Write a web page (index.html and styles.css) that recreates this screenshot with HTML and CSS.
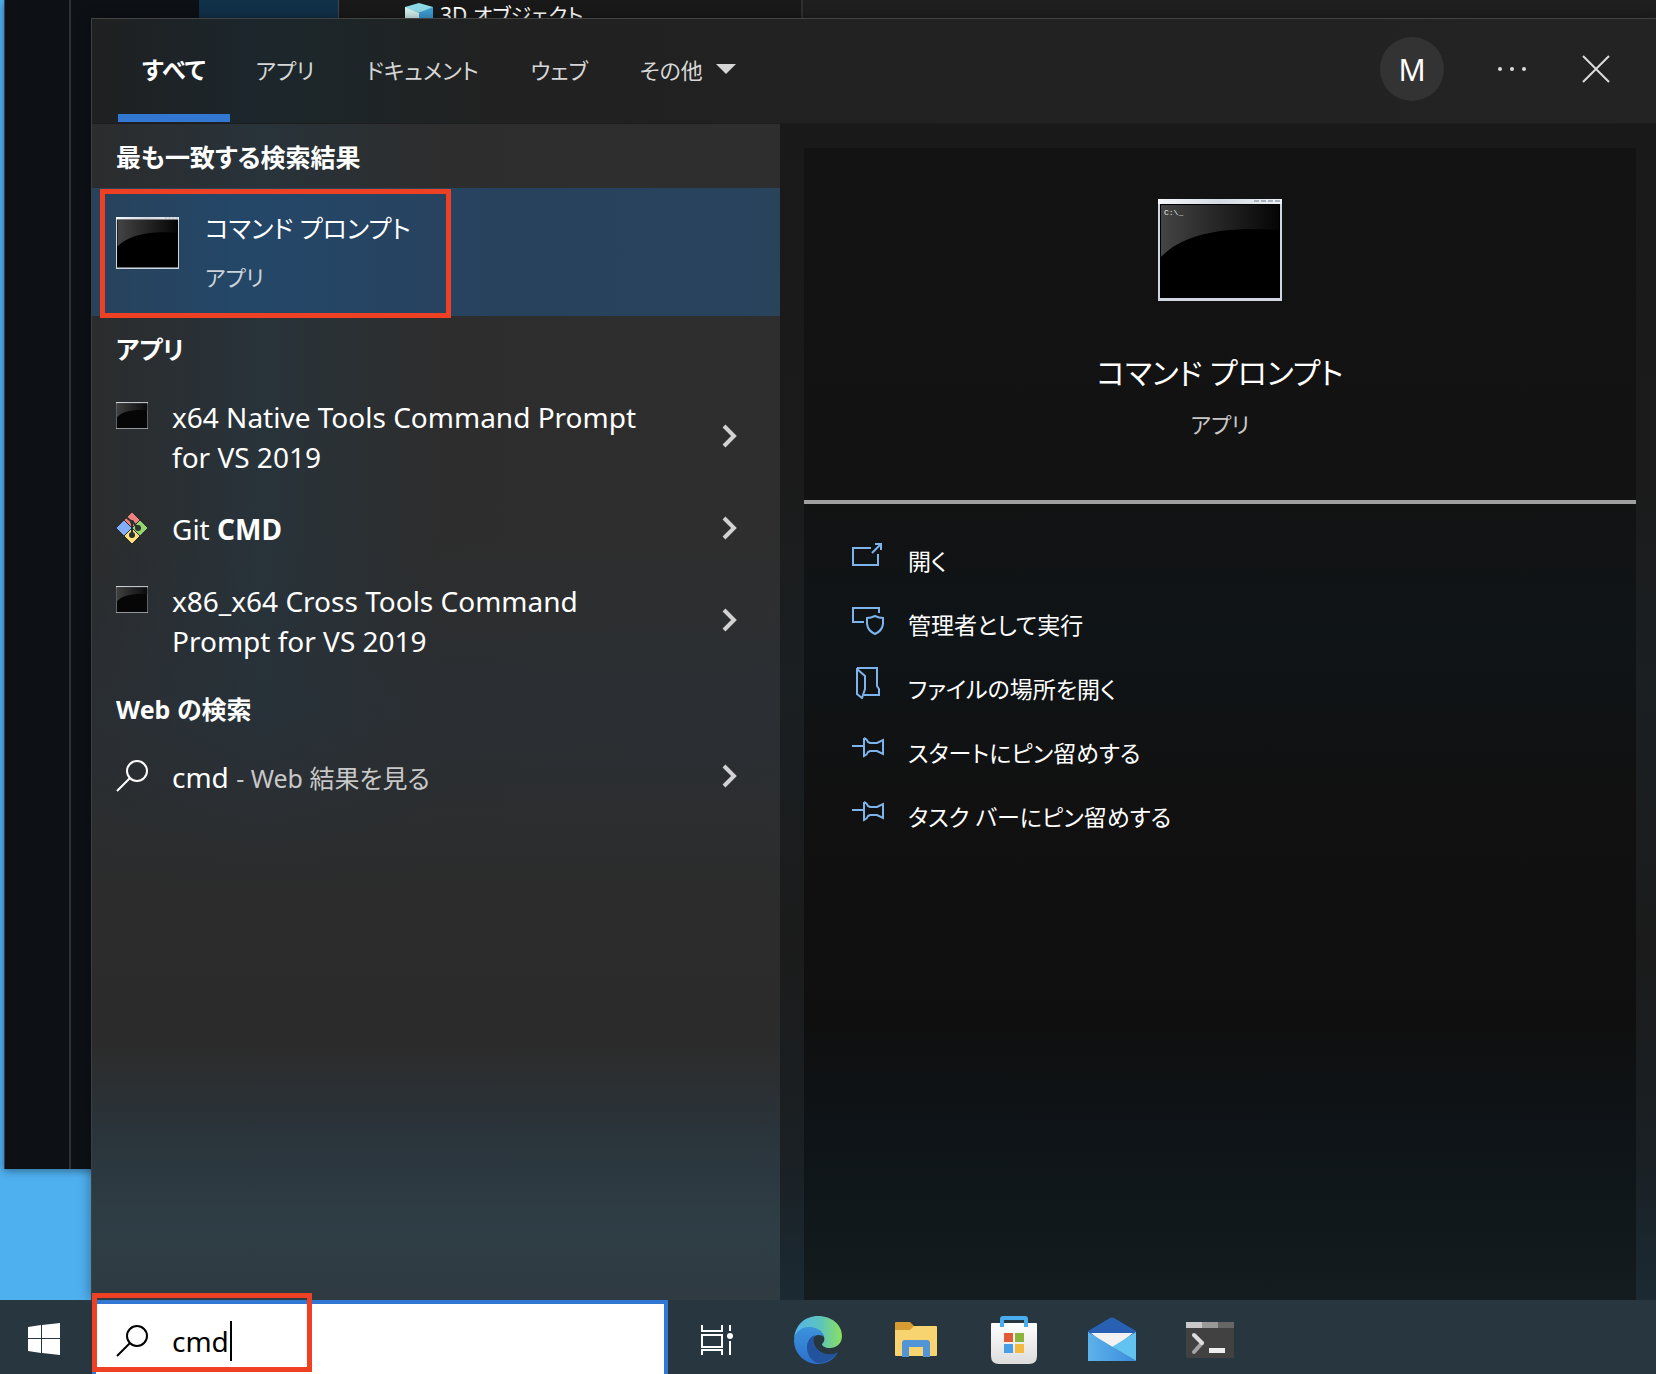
FILE: index.html
```html
<!DOCTYPE html>
<html lang="ja">
<head>
<meta charset="utf-8">
<title>検索</title>
<link rel="stylesheet" href="styles.css">
</head>
<body>
<svg class="defs" width="0" height="0" aria-hidden="true">
  <defs>
    <linearGradient id="bar" x1="0" x2="1"><stop offset="0" stop-color="#f6f8fa"/><stop offset=".5" stop-color="#d3dae2"/><stop offset="1" stop-color="#eef1f4"/></linearGradient>
    <linearGradient id="sheen" x1="0" x2="1"><stop offset="0" stop-color="#444"/><stop offset="1" stop-color="#050505"/></linearGradient>
    <linearGradient id="edgeTop" x1="0" x2="1"><stop offset="0" stop-color="#55b5ee"/><stop offset=".55" stop-color="#5cc4bd"/><stop offset="1" stop-color="#8be05c"/></linearGradient>
    <linearGradient id="edgeLow" x1="0" y1="0" x2="0" y2="1"><stop offset="0" stop-color="#3c93dc"/><stop offset="1" stop-color="#2c70cc"/></linearGradient>
    <linearGradient id="bag" x1="0" y1="0" x2="0" y2="1"><stop offset="0" stop-color="#fff"/><stop offset="1" stop-color="#dcdcdc"/></linearGradient>
    <linearGradient id="mailLow" x1="0" x2="1"><stop offset="0" stop-color="#5db2ea"/><stop offset="1" stop-color="#3b8cdc"/></linearGradient>
    <symbol id="console" viewBox="0 0 124 102">
      <rect width="124" height="102" fill="#cfd6e0"/>
      <rect width="124" height="5" fill="url(#bar)"/>
      <rect x="2" y="5" width="120" height="94" fill="#000"/>
      <path d="M3 6H121V31C66 27 25 35 3 58Z" fill="url(#sheen)"/>
      <path d="M96 2h26" stroke="#aab2bd" stroke-width="2" stroke-dasharray="5 2"/>
    </symbol>
    <symbol id="chevron" viewBox="0 0 16 24"><path d="M2 2l10 10L2 22" fill="none" stroke="#d2d2d2" stroke-width="4"/></symbol>
    <symbol id="search" viewBox="0 0 32 32"><circle cx="21" cy="11" r="10" fill="none" stroke="currentColor" stroke-width="2"/><path d="M14 18L1 31" stroke="currentColor" stroke-width="2"/></symbol>
    <symbol id="pin" viewBox="0 0 32 32"><path d="M0 15h12M12 7v16M12 7q3 1 4 4l2 1h7l6-3v14l-6-3h-7l-2 1q-1 3-4 4v-3" fill="none" stroke="currentColor" stroke-width="2"/></symbol>
  </defs>
</svg>

<div class="desktop">
  <div class="backwindow">
    <div class="rail"></div>
    <div class="nav"><div class="nav-selected"></div></div>
    <div class="files">
      <svg width="28" height="32" viewBox="0 0 28 32"><path d="M14 0l14 4v1l-14 5L0 5V4z" fill="#8edce8"/><path d="M0 4l14 6v22L0 25z" fill="#d6f1f1"/><path d="M28 4l-14 6v22l14-7z" fill="#3e9fd6"/></svg>
      <span>3D オブジェクト</span>
    </div>
    <div class="blank"></div>
  </div>

  <main class="panel">
    <header class="head">
      <nav class="tabs">
        <button class="tab active">すべて</button>
        <button class="tab">アプリ</button>
        <button class="tab">ドキュメント</button>
        <button class="tab">ウェブ</button>
        <button class="tab">その他<svg width="20" height="10" viewBox="0 0 20 10"><path d="M0 0h20L10 10z" fill="#d6d6d6"/></svg></button>
      </nav>
      <div class="tools">
        <button class="avatar">M</button>
        <button class="tool" aria-label="オプション"><svg width="32" height="32" viewBox="0 0 32 32" fill="#dcdcdc"><circle cx="4" cy="16" r="2"/><circle cx="16" cy="16" r="2"/><circle cx="28" cy="16" r="2"/></svg></button>
        <button class="tool" aria-label="閉じる"><svg width="32" height="32" viewBox="0 0 32 32"><path d="M3 3l26 26M29 3L3 29" stroke="#dcdcdc" stroke-width="2"/></svg></button>
      </div>
    </header>

    <div class="columns">
      <section class="results">
        <h2>最も一致する検索結果</h2>
        <button class="best">
          <svg width="63" height="52" viewBox="0 0 124 102" preserveAspectRatio="none"><use href="#console"/></svg>
          <span class="best-text"><span class="best-title">コマンド プロンプト</span><span class="best-kind">アプリ</span></span>
          <span class="mark mark-best"></span>
        </button>
        <h2>アプリ</h2>
        <button class="row">
          <span class="row-icon console"><svg width="32" height="27" viewBox="0 0 124 102" preserveAspectRatio="none" opacity=".85"><use href="#console"/></svg></span>
          <span class="row-text">x64 Native Tools Command Prompt for VS 2019</span>
          <svg class="chev" width="16" height="24"><use href="#chevron"/></svg>
        </button>
        <button class="row">
          <span class="row-icon"><svg width="32" height="32" viewBox="0 0 32 32">
            <path d="M16 1l7 7-7 7-7-7z" fill="#f0807c" stroke="#f0807c" stroke-linejoin="round"/><path d="M8 9l7 7-7 7-7-7z" fill="#80aef8" stroke="#80aef8" stroke-linejoin="round"/><path d="M24 9l7 7-7 7-7-7z" fill="#93d46c" stroke="#93d46c" stroke-linejoin="round"/><path d="M16 17l7 7-7 7-7-7z" fill="#fde07a" stroke="#fde07a" stroke-linejoin="round"/>
            <path d="M10 5l6 5v13M16 9l6 7" fill="none" stroke="#2b3032" stroke-width="2"/>
            <circle cx="16" cy="10" r="2" fill="#2b3032"/><circle cx="16" cy="23" r="3" fill="#2b3032"/><circle cx="22" cy="16" r="3" fill="#2b3032"/></svg></span>
          <span class="row-text">Git <b>CMD</b></span>
          <svg class="chev" width="16" height="24"><use href="#chevron"/></svg>
        </button>
        <button class="row">
          <span class="row-icon console"><svg width="32" height="27" viewBox="0 0 124 102" preserveAspectRatio="none" opacity=".85"><use href="#console"/></svg></span>
          <span class="row-text">x86_x64 Cross Tools Command Prompt for VS 2019</span>
          <svg class="chev" width="16" height="24"><use href="#chevron"/></svg>
        </button>
        <h2>Web の検索</h2>
        <button class="row">
          <span class="row-icon"><svg width="32" height="32"><use href="#search"/></svg></span>
          <span class="row-text">cmd <small>- Web 結果を見る</small></span>
          <svg class="chev" width="16" height="24"><use href="#chevron"/></svg>
        </button>
      </section>

      <section class="detail">
        <div class="card">
          <div class="hero">
            <svg width="124" height="102" viewBox="0 0 124 102"><use href="#console"/><text x="6" y="16" class="prompt">C:\_</text></svg>
            <h1>コマンド プロンプト</h1>
            <p>アプリ</p>
          </div>
          <div class="actions">
            <button class="action"><svg width="32" height="32" viewBox="0 0 32 32"><path d="M19 9H1v17h25V15M20 14l9-9M23 5h6v6" fill="none" stroke="currentColor" stroke-width="2"/></svg>開く</button>
            <button class="action"><svg width="32" height="32" viewBox="0 0 32 32"><path d="M12 19H1V5h26v5M23 13q4 2 8 2v6q-1 7-8 10-7-3-8-10v-6q4 0 8-2z" fill="none" stroke="currentColor" stroke-width="2"/></svg>管理者として実行</button>
            <button class="action"><svg width="32" height="32" viewBox="0 0 32 32"><path d="M5 1h20v18l2 3v6H12M5 1v26l5 4 1-3 2-6V9L5 2" fill="none" stroke="currentColor" stroke-width="2"/></svg>ファイルの場所を開く</button>
            <button class="action"><svg width="32" height="32"><use href="#pin"/></svg>スタートにピン留めする</button>
            <button class="action"><svg width="32" height="32"><use href="#pin"/></svg>タスク バーにピン留めする</button>
          </div>
        </div>
      </section>
    </div>
  </main>
</div>

<footer class="taskbar">
  <button class="start" aria-label="スタート"><svg width="32" height="32" viewBox="0 0 32 32" fill="#fff"><path d="M0 4l13-2v13H0zM14 2l18-2v15H14zM0 16h13v14L0 28zM14 16h18v16l-18-2z"/></svg></button>
  <label class="searchbox">
    <svg width="32" height="32"><use href="#search"/></svg>
    <input type="text" value="cmd" size="3" aria-label="検索"><span class="caret"></span>
    <span class="mark mark-search"></span>
  </label>
  <nav class="apps">
    <button class="app" aria-label="タスク ビュー"><svg width="48" height="48" viewBox="0 0 48 48"><path d="M9 9v6h20V9M9 39v-5h20v5M9 19h20v12H9zM37 9v6M37 25v14" fill="none" stroke="#fff" stroke-width="2"/><circle cx="37" cy="20" r="3" fill="#fff"/></svg></button>
    <button class="app" aria-label="Edge"><svg width="48" height="48" viewBox="0 0 48 48"><path d="M0 23C1 9 11 0 24 0c14 0 24 9 24 20 0 8-6 12-12 12-5 0-8-2-8-4 2-2 3-4 2-7C28 14 20 11 14 12 6 13 1 18 0 23z" fill="url(#edgeTop)"/><path d="M0 24C1 15 8 11 15 11c8 0 14 5 15 10-2-2-6-3-9-1-6 4-4 17 6 21 7 2 13 0 17-5-4 8-12 12-20 12C11 48 0 38 0 24z" fill="url(#edgeLow)"/><path d="M21 19c-11 4-11 22 2 28 8 1 17-4 21-11-5 3-12 3-17 0-7-4-9-12-6-17z" fill="#24539d"/></svg></button>
    <button class="app" aria-label="エクスプローラー"><svg width="48" height="48" viewBox="0 0 48 48"><path d="M3 7q0-1 1-1h14l4 4v4H3z" fill="#d79d33"/><path d="M3 14h15l4-4h22q1 0 1 1v28q0 1-1 1H4q-1 0-1-1z" fill="#f8d470"/><path d="M10 41V27q0-3 3-3h22q3 0 3 3v14h-7V31H17v10z" fill="#5195d8"/></svg></button>
    <button class="app" aria-label="Store"><svg width="48" height="48" viewBox="0 0 48 48"><path d="M1 8q0-1 1-1h44q1 0 1 1v32q0 8-8 8H9q-8 0-8-8z" fill="url(#bag)"/><path d="M12 11V3q0-1 1-1h22q1 0 1 1v8" fill="none" stroke="#49aeef" stroke-width="4"/><path d="M14 17h9v9h-9z" fill="#e05b36"/><path d="M25 17h9v9h-9z" fill="#8ab43a"/><path d="M14 28h9v9h-9z" fill="#479fe8"/><path d="M25 28h9v9h-9z" fill="#f6b93f"/></svg></button>
    <button class="app" aria-label="メール"><svg width="48" height="48" viewBox="0 0 48 48"><path d="M0 15L22 2q2-1 4 0l22 13v6H0z" fill="#2860b4"/><path d="M3 17h42L24 34z" fill="#f2f2f2"/><path d="M48 16v29L24 31z" fill="#62c3f0"/><path d="M0 16l48 29H0z" fill="url(#mailLow)"/></svg></button>
    <button class="app" aria-label="ターミナル"><svg width="48" height="48" viewBox="0 0 48 48"><rect y="6" width="48" height="36" rx="1" fill="#414141"/><path d="M0 6h16v6H0z" fill="#c9c9c9"/><path d="M16 6h16v6H16z" fill="#999"/><path d="M32 6h16v6H32z" fill="#666"/><path d="M16 27l-8 9" stroke="#a5a5a5" stroke-width="4" stroke-linecap="round"/><path d="M8 19l8 8" stroke="#dedede" stroke-width="4" stroke-linecap="round"/><path d="M23 32h16v5H23z" fill="#ededed"/></svg></button>
  </nav>
</footer>
</body>
</html>
```

FILE: styles.css
```css
* {
  box-sizing: border-box;
}

body {
  margin: 0;
  min-height: 100vh;
  display: flex;
  flex-direction: column;
  overflow: hidden;
  font-family: "Noto Sans", "Noto Sans CJK JP", sans-serif;
  font-feature-settings: "palt";
  font-size: 22px;
  color: #fff;
  background: #4fb0f0;
}

button,
input {
  font: inherit;
  font-feature-settings: inherit;
  color: inherit;
  background: none;
  border: 0;
  padding: 0;
  text-align: left;
}

svg {
  display: block;
  flex: none;
}

.defs {
  position: absolute;
}

.desktop {
  flex: 1;
  position: relative;
  display: flex;
  padding: 18px 0 0 91px;
}

/* window that shows behind the search panel */
.backwindow {
  position: absolute;
  inset: 0 0 131px 4px;
  display: flex;
  background: #0d1116;
  border-left: 1px solid #30414d;
  box-shadow: 0 2px 8px #0006;
}

.rail {
  width: 66px;
  border-right: 2px solid #303235;
}

.nav {
  width: 268px;
  padding-left: 128px;
  border-right: 1px solid #3c4650;
}

.nav-selected {
  height: 100%;
  background: #113149;
}

.files {
  width: 464px;
  padding: 3px 0 0 66px;
  display: flex;
  align-items: flex-start;
  gap: 7px;
  font-size: 21px;
  line-height: 24px;
  background: #191919;
  border-right: 2px solid #303030;
}

.blank {
  flex: 1;
  background: #1f1f1f;
}

.panel {
  position: relative;
  flex: 1;
  display: flex;
  flex-direction: column;
  border-top: 1px solid #434343;
  border-left: 1px solid #3c4043;
  background: #222;
  box-shadow: 0 0 12px #0006;
}

.head {
  height: 105px;
  display: flex;
  justify-content: space-between;
  padding: 0 18px 0 26px;
  background: linear-gradient(90deg, #1f2021 0, #1c262c 160px, #1d2629 220px, #212121 400px, #232323 100%);
  border-bottom: 1px solid #1c1c1c;
}

.tabs {
  display: flex;
}

.tab {
  display: flex;
  align-items: center;
  gap: 13px;
  margin-bottom: 1px;
  padding: 0 26px 4px;
  color: #d6d6d6;
  border-top: 8px solid transparent;
  border-bottom: 8px solid transparent;
}

.tab.active {
  padding: 0 24px 4px;
  color: #fff;
  font-size: 24px;
  font-weight: 700;
  border-bottom-color: #3277d2;
}

.tools {
  display: flex;
  align-items: center;
  padding-bottom: 4px;
}

.avatar {
  width: 64px;
  height: 64px;
  margin-right: 26px;
  border-radius: 50%;
  background: #333;
  font-size: 30px;
  text-align: center;
}

.tool {
  width: 84px;
  height: 64px;
  display: grid;
  place-items: center;
}

.columns {
  flex: 1;
  display: flex;
}

.results {
  flex: 0 0 688px;
  background:
    linear-gradient(180deg, #2d2d2d00 0, #2d2d2d00 60%, #2c2b2b 78%, #2a343b 86%, #2f3e46 94%, #2f3a41 100%),
    linear-gradient(180deg, #28303800 0, #28303800 35%, #28303888 50%, #2c2c2c 66%),
    linear-gradient(90deg, #2b2c2d 0, #28333a 170px, #2d2d2d 350px, #2e2e2e 100%);
}

h2 {
  margin: 0;
  padding: 2px 24px 0;
  font-size: 25px;
  font-weight: 700;
  line-height: 62px;
}

.best {
  position: relative;
  display: flex;
  align-items: flex-start;
  gap: 26px;
  width: 100%;
  height: 128px;
  padding: 16px 24px;
  background: linear-gradient(90deg, #28425c 0, #244768 150px, #28425e 400px, #29435d 100%);
}

.best svg {
  margin-top: 13px;
}

.best-text {
  display: flex;
  flex-direction: column;
  gap: 9px;
}

.best-title {
  font-size: 25px;
  line-height: 48px;
}

.best-kind {
  line-height: 32px;
  color: #ccd3da;
}

.mark {
  position: absolute;
  border: 5px solid #ee4023;
  pointer-events: none;
}

.mark-best {
  left: 8px;
  top: 1px;
  width: 351px;
  height: 129px;
}

.row {
  display: flex;
  align-items: flex-start;
  width: 100%;
  padding: 16px 42px 16px 24px;
  font-size: 28px;
  line-height: 40px;
}

.row-icon {
  width: 56px;
  padding-top: 4px;
}

.row-icon.console {
  padding-top: 6px;
}

.row-text {
  flex: 1;
  padding: 1px 60px 0 0;
  margin-bottom: -1px;
}

.row-text small {
  font-size: 25px;
  line-height: 24px;
  color: #c8c8c8;
}

.chev {
  align-self: center;
}

.detail {
  flex: 1;
  padding: 24px 20px 0 24px;
  background: linear-gradient(180deg, #191919 0, #1b1b1b 30%, #1a1f22 48%, #1b1b1b 70%, #1a2024 88%, #1b2a33 100%);
}

.card {
  height: 100%;
  background: linear-gradient(180deg, #131313 0, #121212 30%, #0f1417 42%, #111 56%, #0f0f0f 76%, #0e1418 86%, #141c20 100%);
}

.hero {
  display: flex;
  flex-direction: column;
  align-items: center;
  padding: 51px 0 57px;
  border-bottom: 4px solid #a0a0a0;
}

.prompt {
  font: 8px "Liberation Mono", monospace;
  fill: #eee;
}

h1 {
  margin: 48px 0 8px;
  font-size: 30px;
  font-weight: 400;
  line-height: 48px;
}

.hero p {
  margin: 0;
  line-height: 38px;
  color: #c8c8c8;
}

.actions {
  padding: 25px 48px;
}

.action {
  display: flex;
  gap: 24px;
  width: 100%;
  height: 64px;
  font-size: 23px;
  line-height: 64px;
}

.action svg {
  margin-top: 10px;
  color: #7db4ec;
}

.taskbar {
  position: relative;
  display: flex;
  height: 74px;
  background: #27363f;
}

.start {
  width: 92px;
  padding: 0 0 4px 28px;
}

.start svg {
  margin-top: 8px;
}

.searchbox {
  position: relative;
  display: flex;
  align-items: center;
  width: 576px;
  padding: 4px 20px 0;
  color: #000;
  background: #fff;
  border: 4px solid #3277d2;
  border-bottom: 0;
}

.searchbox input {
  field-sizing: content;
  margin-left: 24px;
  font-size: 28px;
  outline: 0;
}

.caret {
  width: 2px;
  height: 40px;
  margin-left: 1px;
  background: #000;
}

.mark-search {
  left: -4px;
  top: -11px;
  width: 220px;
  height: 79px;
}

.apps {
  display: flex;
}

.app {
  width: 98px;
  display: grid;
  place-items: center;
  padding-top: 6px;
}

.app:first-child {
  width: 101px;
  padding-right: 4px;
}
```
